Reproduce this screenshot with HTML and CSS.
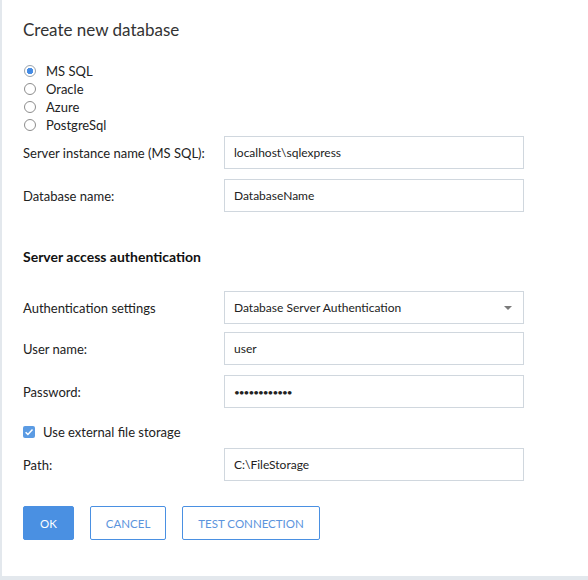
FILE: index.html
```html
<!DOCTYPE html>
<html lang="en">
<head>
    <meta charset="UTF-8">
    <title>Create new database</title>
    <link rel="stylesheet" href="styles.css">
</head>
<body>
    <div class="dialog">
        <h1 class="dialog-title">Create new database</h1>

        <!-- Database type -->
        <div class="db-types">
            <label class="radio-row"><input type="radio" name="dbtype" checked><span>MS SQL</span></label>
            <label class="radio-row"><input type="radio" name="dbtype"><span>Oracle</span></label>
            <label class="radio-row"><input type="radio" name="dbtype"><span>Azure</span></label>
            <label class="radio-row"><input type="radio" name="dbtype"><span>PostgreSql</span></label>
        </div>

        <div class="field">
            <label for="server">Server instance name (MS SQL):</label>
            <input type="text" id="server" value="localhost\sqlexpress">
        </div>
        <div class="field">
            <label for="dbName">Database name:</label>
            <input type="text" id="dbName" value="DatabaseName">
        </div>

        <h2 class="section-title">Server access authentication</h2>

        <div class="field field-tight">
            <label for="auth">Authentication settings</label>
            <div class="select">
                <span>Database Server Authentication</span>
                <span class="caret"></span>
            </div>
        </div>
        <div class="field">
            <label for="user">User name:</label>
            <input type="text" id="user" value="user">
        </div>
        <div class="field">
            <label for="password">Password:</label>
            <input type="password" id="password" value="************">
        </div>

        <label class="check-row">
            <span class="checkbox">
                <svg width="12" height="12" viewBox="0 0 12 12"><path d="M2.6 6.2l2.3 2.2 4.6-4.8" fill="none" stroke="#fff" stroke-width="1.5"/></svg>
            </span>
            <span>Use external file storage</span>
        </label>

        <div class="field">
            <label for="path">Path:</label>
            <input type="text" id="path" value="C:\FileStorage">
        </div>

        <div class="actions">
            <button class="btn btn-primary">OK</button>
            <button class="btn">CANCEL</button>
            <button class="btn">TEST CONNECTION</button>
        </div>
    </div>
</body>
</html>
```

FILE: styles.css
```css
body {
    margin: 0;
    padding: 0;
    background-color: #e3e8ed;
    font-family: Lato, "Open Sans", sans-serif;
    color: #222;
}
.dialog {
    margin-left: 2px;
    height: 576px;
    box-sizing: border-box;
    padding: 18px 0 0 21px;
    background-color: #fff;
}
.dialog-title {
    margin: 0;
    font-size: 17px;
    line-height: 24px;
    font-weight: normal;
    color: #333;
}
.db-types {
    margin-top: 20px;
    margin-bottom: 2px;
}
.radio-row {
    display: flex;
    align-items: center;
    height: 18px;
    font-size: 13px;
}
.radio-row input {
    appearance: none;
    width: 12px;
    height: 12px;
    margin: 0 10px 0 1px;
    border: 1px solid #8d8d8d;
    border-radius: 50%;
    box-sizing: border-box;
    background: #fff;
}
.radio-row input:checked {
    border-color: #9aa4ae;
    background: radial-gradient(circle, #3f86e0 0, #4a8fe6 3px, #fff 3.5px);
}
.field {
    display: flex;
    align-items: center;
    margin-bottom: 10px;
    font-size: 13px;
}
.field-tight {
    margin-bottom: 8px;
}
.field label {
    width: 201px;
}
.field input, .select {
    width: 300px;
    height: 33px;
    box-sizing: border-box;
    margin: 0;
    padding: 0 9px;
    border: 1px solid #d0d7de;
    font-family: inherit;
    font-size: 12px;
    color: #222;
}
.field input[type="password"] {
    font-size: 10px;
    letter-spacing: -1px;
}
.select {
    display: flex;
    align-items: center;
    justify-content: space-between;
}
.caret {
    width: 0;
    height: 0;
    margin-right: 2px;
    border-left: 4px solid transparent;
    border-right: 4px solid transparent;
    border-top: 4px solid #7a7a7a;
}
.section-title {
    margin: 35px 0 24px;
    font-size: 14px;
    line-height: 20px;
    font-weight: bold;
    color: #111;
}
.check-row {
    display: flex;
    align-items: center;
    height: 20px;
    margin: 14px 0 6px;
    font-size: 13px;
}
.checkbox {
    display: flex;
    width: 12px;
    height: 12px;
    margin: 0 8px 0 0;
    border-radius: 2px;
    background-color: #5b9be3;
}
.actions {
    display: flex;
    gap: 16px;
    margin-top: 25px;
}
.btn {
    height: 34px;
    padding: 0 15px;
    border: 1px solid #4a90e2;
    border-radius: 2px;
    background-color: #fff;
    font-family: inherit;
    font-size: 11.5px;
    color: #5b94dd;
    cursor: pointer;
}
.btn-primary {
    padding: 0 16px;
    background-color: #4a90e2;
    color: #fff;
}
```
